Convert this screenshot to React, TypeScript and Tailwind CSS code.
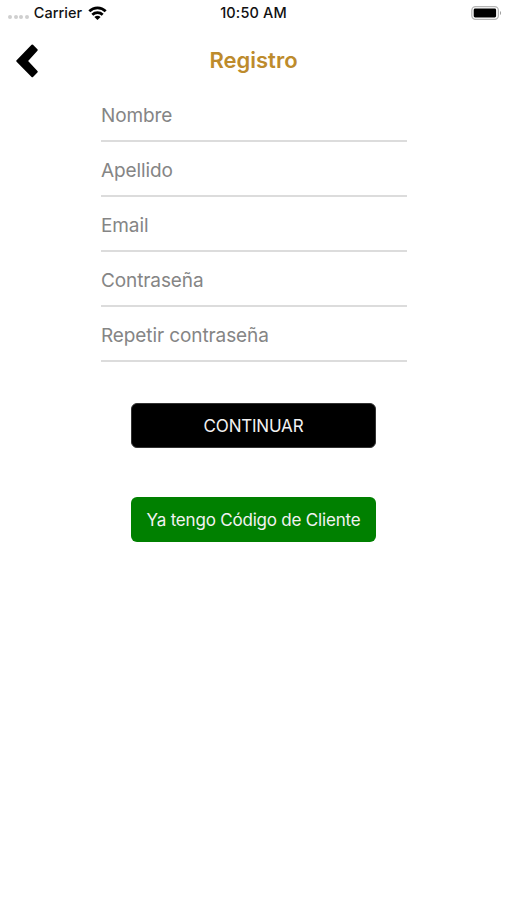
const fields = [
  "Nombre",
  "Apellido",
  "Email",
  "Contraseña",
  "Repetir contraseña",
];

function StatusBar() {
  return (
    <div className="grid h-[26px] grid-cols-3 items-center text-[14.5px] font-medium text-[#111]">
      <div className="flex items-center pl-2">
        <div className="mt-2 flex gap-[1.6px]">
          <span className="size-1 rounded-full bg-[#cfcfcf]" />
          <span className="size-1 rounded-full bg-[#cfcfcf]" />
          <span className="size-1 rounded-full bg-[#cfcfcf]" />
          <span className="size-1 rounded-full bg-[#cfcfcf]" />
        </div>
        <span className="ml-[5px] text-[14.5px]">Carrier</span>
        <svg className="ml-1.5" width="19" height="14" viewBox="0 0 19 14" fill="none" stroke="#000" strokeWidth="2.7">
          <path d="M1.3 5.3C5.9.7 13.1.7 17.7 5.3" />
          <path d="M4.3 8.7c2.9-2.8 7.5-2.8 10.4 0" />
          <path d="M9.5 14 6.4 11c1.7-1.6 4.5-1.6 6.2 0z" fill="#000" stroke="none" />
        </svg>
      </div>
      <span className="text-center tracking-[0.15px] whitespace-nowrap">10:50 AM</span>
      <div className="flex justify-end pr-[5px]">
        <svg width="31" height="14" viewBox="0 0 31 14">
          <rect x="0.8" y="0.7" width="26.6" height="12.6" rx="3.8" fill="#fff" stroke="#b5b5b5" strokeWidth="1.3" />
          <rect x="2.7" y="2.6" width="22.4" height="8.9" rx="1.4" fill="#000" />
          <path d="M29 5v4c1.4-.6 1.4-3.4 0-4z" fill="#999" />
        </svg>
      </div>
    </div>
  );
}

function Header() {
  return (
    <header className="grid h-[68px] grid-cols-3 items-center">
      <button type="button" aria-label="Volver" className="justify-self-start pt-0.5 pl-4">
        <svg width="23" height="34" viewBox="0 0 23 34">
          <path
            d="M16.3 1.5 20.7 6 10.7 17 20.7 27.8 16.3 32.2 1.3 17z"
            stroke="#000"
            strokeWidth="2"
            strokeLinejoin="round"
          />
        </svg>
      </button>
      <h1 className="text-center text-[22px] font-semibold text-[#bd8b2c]">Registro</h1>
    </header>
  );
}

export default function App() {
  return (
    <div className="min-h-screen bg-white font-['Inter','Liberation_Sans',sans-serif]">
      <StatusBar />
      <Header />
      <main className="flex flex-col items-center">
        <form className="flex w-[306px] flex-col">
          {fields.map((field, i) => (
            <label
              key={field}
              className={`flex items-center border-b-2 border-[#dcdcdc] pl-[0.5px] text-[19px] tracking-[-0.1px] text-[#858585] ${
                i === 0 ? "h-[48px] pb-px" : "h-[55px] pt-1.5"
              }`}
            >
              {field}
            </label>
          ))}
        </form>
        <button
          type="button"
          className="mt-[41px] h-[45px] w-[245px] rounded-md border border-[#333] bg-black pt-0.5 text-[17px] tracking-[-0.2px] text-[#f2f2f2]"
        >
          CONTINUAR
        </button>
        <button
          type="button"
          className="mt-[49px] h-[45px] w-[245px] rounded-md bg-[#008000] pt-0.5 text-[17px] tracking-[-0.2px] text-[#f2f2f2]"
        >
          Ya tengo Código de Cliente
        </button>
      </main>
    </div>
  );
}
